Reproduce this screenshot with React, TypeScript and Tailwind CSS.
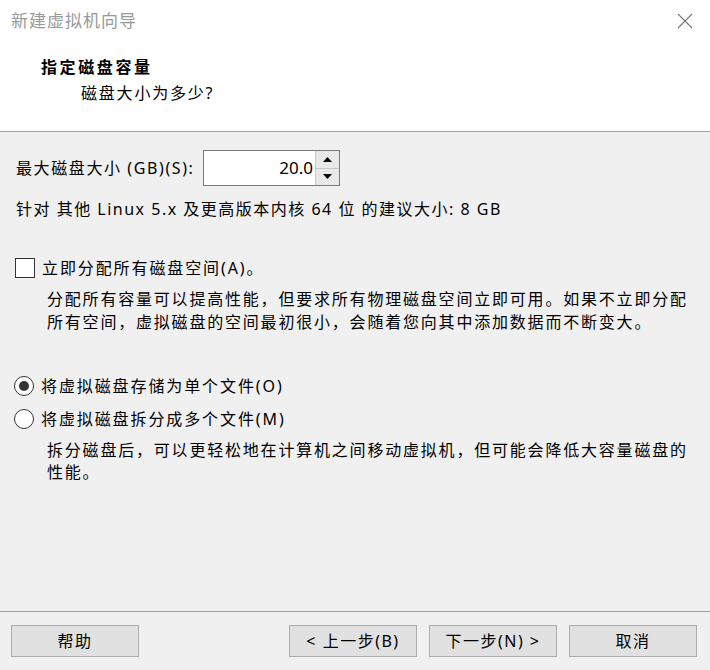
const font = { fontFamily: '"Noto Sans", "Noto Sans CJK SC", sans-serif' };

function Button({ children }: { children: React.ReactNode }) {
  return (
    <button className="w-[128px] h-[32px] bg-[#e1e1e1] border border-[#adadad] text-[16px] tracking-[1.5px] text-black flex items-center justify-center">
      {children}
    </button>
  );
}

function Radio({ checked, label }: { checked?: boolean; label: string }) {
  return (
    <div className="flex items-center h-[24px] -ml-px">
      <span className="w-[20px] h-[20px] rounded-full border border-[#333] bg-white flex items-center justify-center">
        {checked && <span className="w-[10px] h-[10px] rounded-full bg-[#333]" />}
      </span>
      <span className="ml-[7px] text-[16px] tracking-[1.9px]">{label}</span>
    </div>
  );
}

export default function App() {
  return (
    <div className="w-[710px] h-[670px] bg-[#f0f0f0] flex flex-col text-black" style={font}>
      {/* header */}
      <div className="bg-white h-[132px] border-b border-[#a0a0a0] shrink-0">
        <div className="flex items-center justify-between h-[41px] pl-[11px] pr-[17px]">
          <span className="text-[17px] text-[#999] tracking-[1px]">新建虚拟机向导</span>
          <svg width="16" height="16" viewBox="0 0 16 16" className="text-[#777]">
            <path d="M1 1 L15 15 M15 1 L1 15" stroke="currentColor" strokeWidth="1.1" />
          </svg>
        </div>
        <div className="pl-[41px] pt-[14px]">
          <div className="h-[24px] flex items-center text-[16px] font-bold tracking-[2.6px]">指定磁盘容量</div>
          <div className="h-[28px] flex items-center pl-[40px] text-[16px] tracking-[1.8px]">磁盘大小为多少?</div>
        </div>
      </div>

      {/* body */}
      <div className="flex-1 pl-[15px] pr-[16px] pt-[18px] text-[16px]">
        <div className="flex items-center h-[36px]">
          <span className="ml-px w-[187px] tracking-[1.6px]">最大磁盘大小 (GB)(S):</span>
          <div className="flex h-[36px] w-[137px] border border-[#7a7a7a] bg-white">
            <div className="flex-1 flex items-center justify-end pr-[2px] text-[17px]">20.0</div>
            <div className="w-[24px] flex flex-col border-l border-[#c8c8c8] bg-[#e9e9e9]">
              <div className="flex-1 flex items-center justify-center border-b border-[#c8c8c8]">
                <svg width="9" height="5" viewBox="0 0 9 5"><path d="M0 5 L4.5 0 L9 5 Z" fill="#000" /></svg>
              </div>
              <div className="flex-1 flex items-center justify-center">
                <svg width="9" height="5" viewBox="0 0 9 5"><path d="M0 0 L4.5 5 L9 0 Z" fill="#000" /></svg>
              </div>
            </div>
          </div>
        </div>

        <div className="mt-[11px] h-[24px] flex items-center ml-px tracking-[1.5px]">
          针对 其他 Linux 5.x 及更高版本内核 64 位 的建议大小: 8 GB
        </div>

        <div className="mt-[35px] flex items-center h-[24px]">
          <span className="w-[20px] h-[20px] border border-[#333] bg-white" />
          <span className="ml-[7px] tracking-[1.9px]">立即分配所有磁盘空间(A)。</span>
        </div>
        <div className="mt-[8px] ml-[32px] leading-[23px] tracking-[1.8px]">
          <div>分配所有容量可以提高性能，但要求所有物理磁盘空间立即可用。如果不立即分配</div>
          <div>所有空间，虚拟磁盘的空间最初很小，会随着您向其中添加数据而不断变大。</div>
        </div>

        <div className="mt-[40px]">
          <Radio checked label="将虚拟磁盘存储为单个文件(O)" />
        </div>
        <div className="mt-[9px]">
          <Radio label="将虚拟磁盘拆分成多个文件(M)" />
        </div>
        <div className="mt-[8px] ml-[32px] leading-[22px] tracking-[1.8px]">
          <div>拆分磁盘后，可以更轻松地在计算机之间移动虚拟机，但可能会降低大容量磁盘的</div>
          <div>性能。</div>
        </div>
      </div>

      {/* footer */}
      <div className="h-[59px] shrink-0 border-t border-[#a0a0a0] flex items-start pt-[13px] pl-[11px] pr-[13px]">
        <Button>帮助</Button>
        <div className="ml-auto flex gap-[12px]">
          <Button>&lt; 上一步(B)</Button>
          <Button>下一步(N) &gt;</Button>
          <Button>取消</Button>
        </div>
      </div>
    </div>
  );
}
